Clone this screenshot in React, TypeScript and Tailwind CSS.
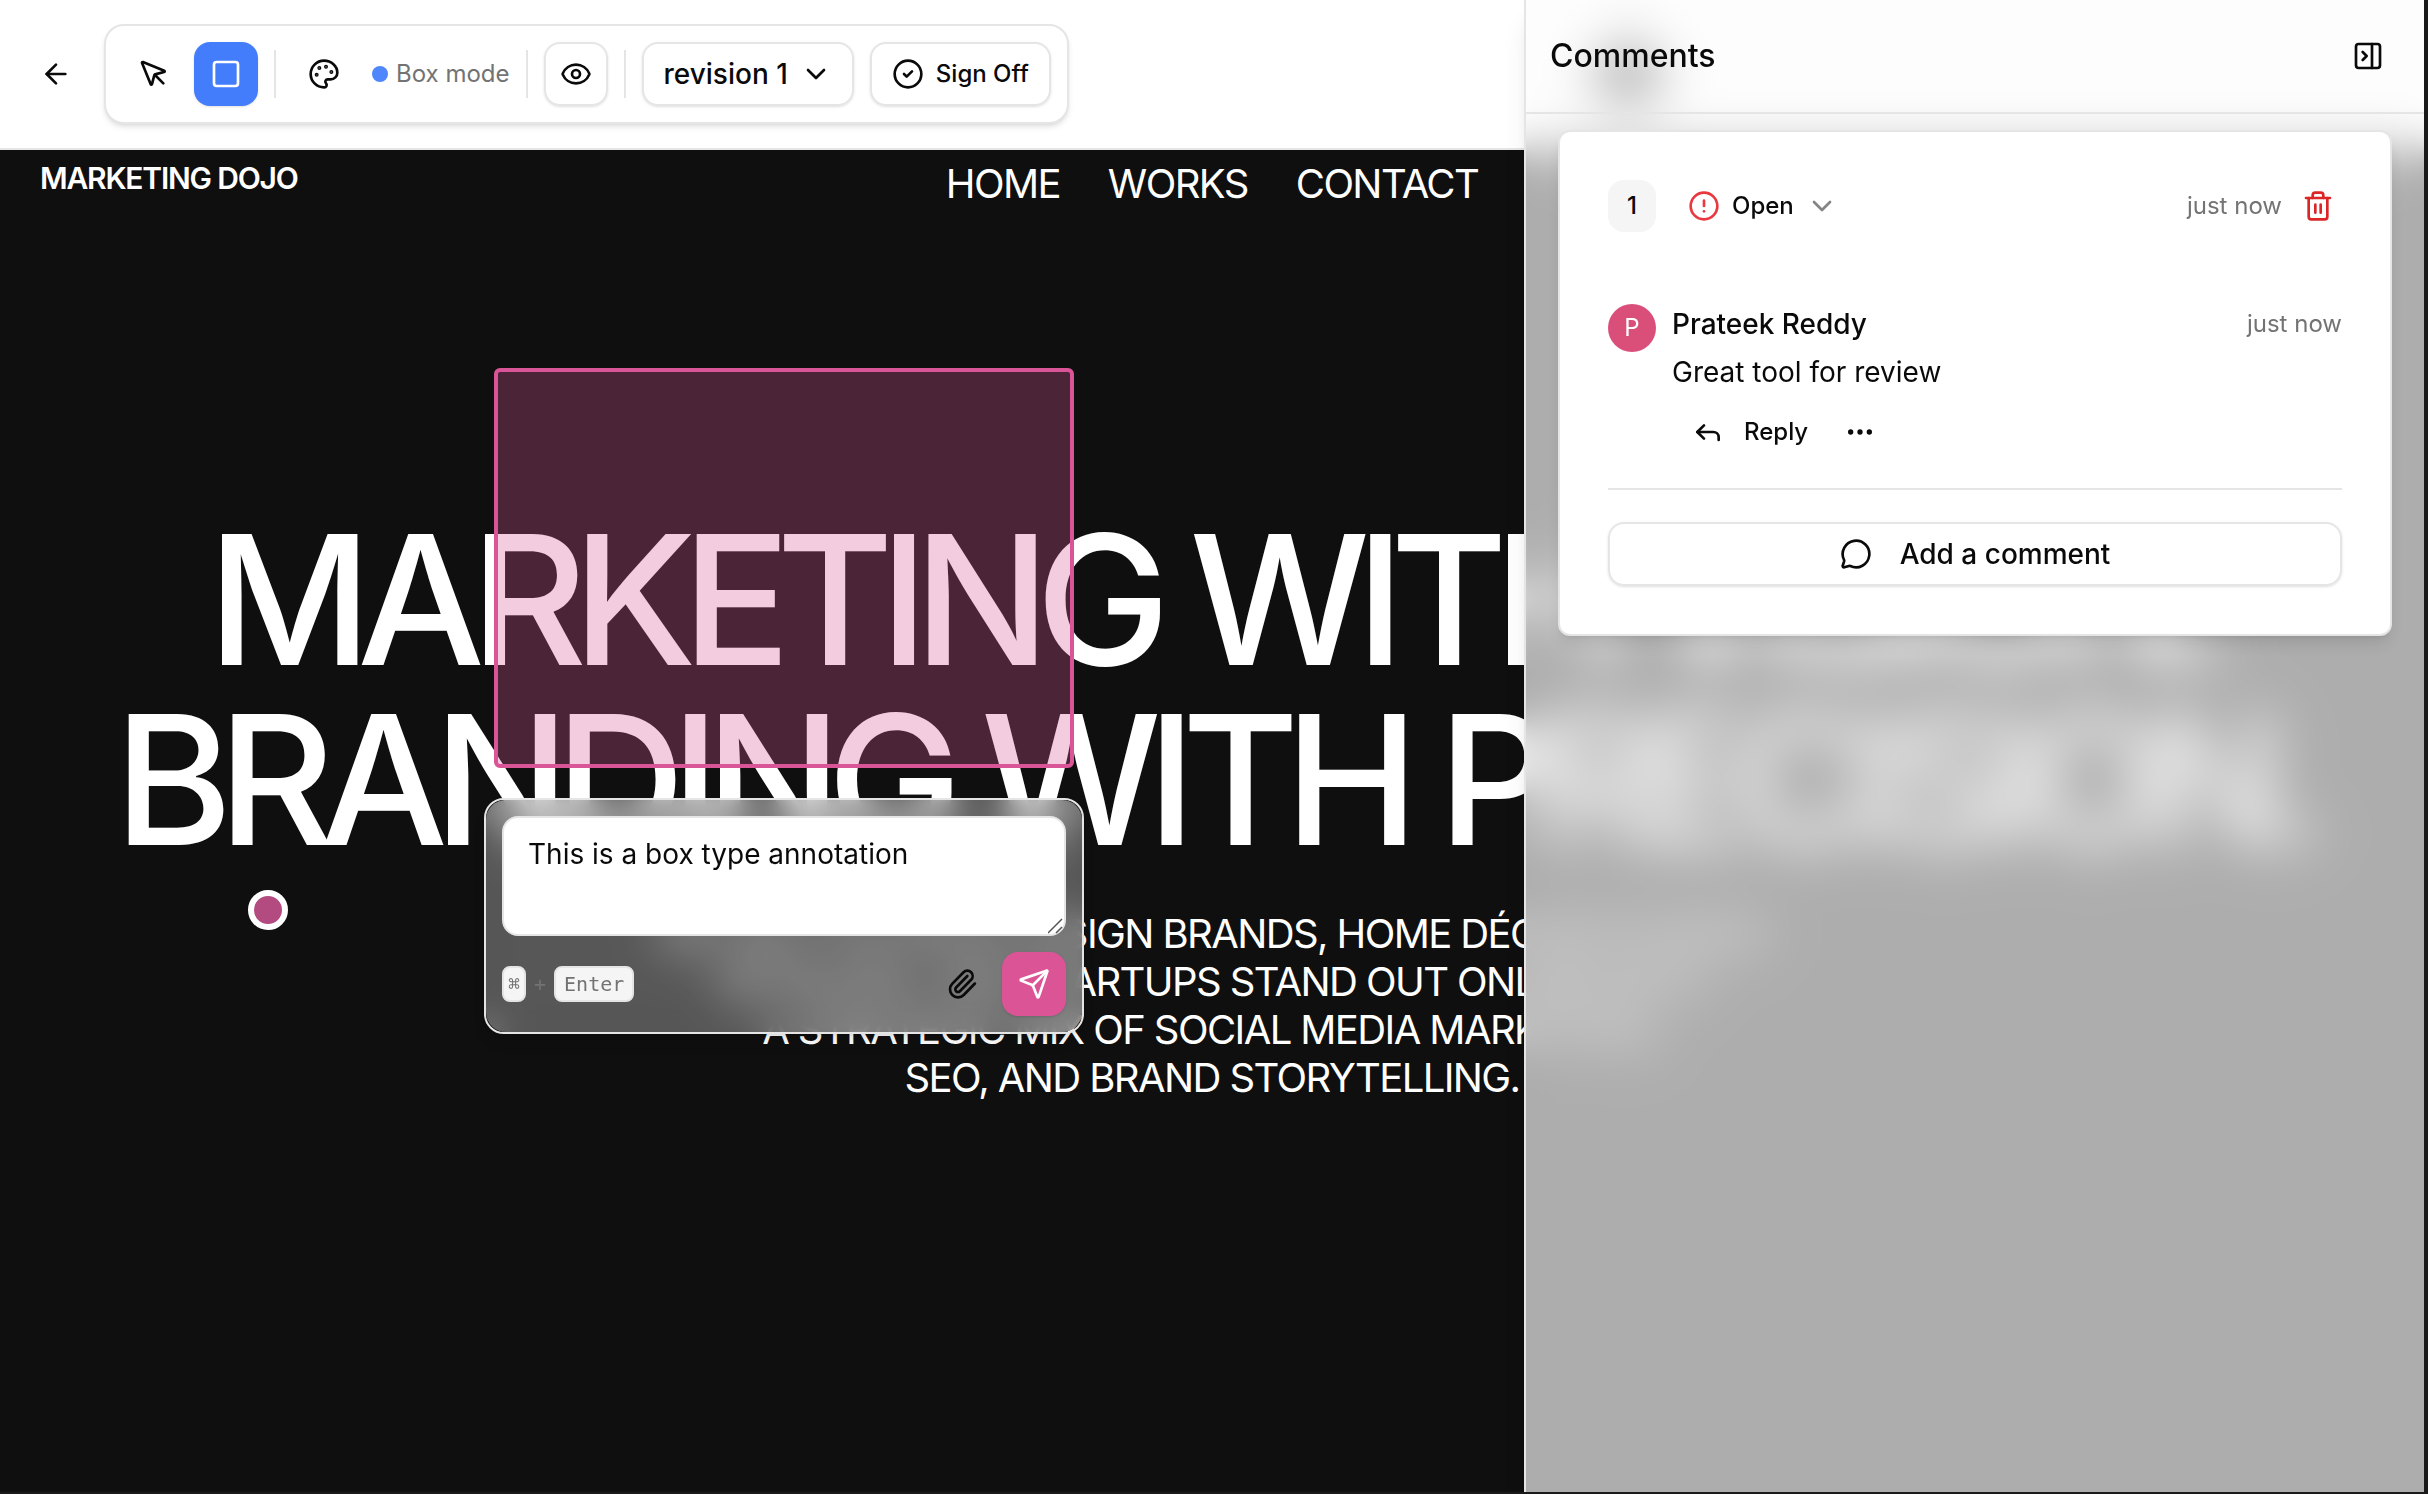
import { useState, type ButtonHTMLAttributes, type ReactNode } from "react";
import {
  ArrowLeft,
  ChevronDown,
  CircleAlert,
  CircleCheck,
  Ellipsis,
  Eye,
  MessageCircle,
  MousePointer,
  Palette,
  PanelRightClose,
  Paperclip,
  Reply,
  Send,
  Square,
  Trash2,
} from "lucide-react";

interface IconButtonProps extends ButtonHTMLAttributes<HTMLButtonElement> {
  label: string;
  children: ReactNode;
}

function IconButton({ label, children, className = "", ...rest }: IconButtonProps) {
  return (
    <button
      type="button"
      aria-label={label}
      className={`size-16 shrink-0 flex items-center justify-center rounded-2xl ${className}`}
      {...rest}
    >
      {children}
    </button>
  );
}

function Divider() {
  return <div className="w-0.5 h-12 bg-[#e5e5e5]" />;
}

// Frosted background. Several small blur passes instead of one big one,
// a single large radius lets the sharp content show through at the edges.
function Glass({ passes, tint }: { passes: number; tint: string }) {
  return (
    <>
      {Array.from({ length: passes }).map((_, i) => (
        <div key={i} className="absolute inset-0 rounded-[inherit] backdrop-blur-md" />
      ))}
      <div className={`absolute inset-0 rounded-[inherit] ${tint}`} />
    </>
  );
}

function Toolbar() {
  return (
    <header className="flex items-center gap-4 px-6 py-6 bg-white border-b-2 border-[#e5e5e5]">
      <IconButton label="Back">
        <ArrowLeft className="size-8" />
      </IconButton>

      <div className="flex items-center gap-4 p-4 bg-white border-2 border-[#e5e5e5] rounded-[20px] shadow-md">
        <div className="flex items-center gap-2">
          <IconButton label="Select">
            <MousePointer className="size-8" />
          </IconButton>
          <IconButton label="Box" className="bg-[#447dfc] text-white shadow-sm">
            <Square className="size-8" />
          </IconButton>
        </div>
        <Divider />
        <IconButton label="Color">
          <Palette className="size-8" />
        </IconButton>
        <div className="flex items-center gap-2 text-2xl text-[#737373]">
          <span className="size-4 rounded-full bg-[#4f86fc]" />
          Box mode
        </div>
        <Divider />
        <IconButton label="Preview" className="border-2 border-[#e5e5e5] shadow-sm">
          <Eye className="size-8" />
        </IconButton>
        <Divider />
        <button
          type="button"
          className="h-16 px-5 flex items-center gap-3 border-2 border-[#e5e5e5] rounded-2xl shadow-sm text-[28px] font-medium"
        >
          revision 1
          <ChevronDown className="size-8" />
        </button>
        <button
          type="button"
          className="h-16 px-5 flex items-center gap-3 border-2 border-[#e5e5e5] rounded-2xl shadow-sm text-2xl font-medium"
        >
          <CircleCheck className="size-8" />
          Sign Off
        </button>
      </div>

      {/* user avatar, sits under the comments panel */}
      <div className="grow flex justify-end pr-[740px]">
        <span className="size-16 rounded-full bg-[#111111]" />
      </div>
    </header>
  );
}

// The reviewed website, shown under the annotations
function SitePreview() {
  return (
    <main className="relative grow bg-[#0f0f0f] text-white">
      <nav className="grid grid-cols-3 items-start px-10 pt-2.5">
        <a href="#" className="text-[30px] leading-9 font-semibold tracking-[-0.04em]">
          MARKETING DOJO
        </a>
        <div className="flex justify-center gap-12 text-[40px] leading-12 tracking-[-0.04em]">
          <a href="#home">HOME</a>
          <a href="#works">WORKS</a>
          <a href="#contact">CONTACT</a>
        </div>
      </nav>

      <section className="pt-[302px] text-center whitespace-nowrap">
        <h1 className="text-[180px] leading-[180px] font-medium tracking-[-0.08em]">
          MARKETING WITH VISION.
          <br />
          BRANDING WITH PRECISION.
        </h1>
        <p className="mt-10 text-[40px] leading-12 tracking-[-0.04em]">
          WE HELP INTERIOR DESIGN BRANDS, HOME DÉCOR STUDIOS
          <br />
          RETAILERS, AND STARTUPS STAND OUT ONLINE WITH
          <br />
          A STRATEGIC MIX OF SOCIAL MEDIA MARKETING,
          <br />
          SEO, AND BRAND STORYTELLING.
        </p>
      </section>

      <div className="absolute left-[494px] top-[218px] w-[580px] h-[400px] border-4 border-[#da5597] bg-[#d75894]/30 rounded-md" />
      <button
        type="button"
        aria-label="Open pin"
        className="absolute left-[248px] top-[740px] size-10 rounded-full border-6 border-white bg-[#b34a80]"
      />
      <AnnotationForm />
    </main>
  );
}

function AnnotationForm() {
  const [text, setText] = useState("This is a box type annotation");

  return (
    <form
      className="absolute left-[484px] top-[648px] w-[600px] p-4 border-2 border-[#e5e5e5] rounded-[20px] shadow-lg text-[#0a0a0a]"
      onSubmit={(e) => e.preventDefault()}
    >
      <Glass passes={4} tint="bg-white/30" />
      <div className="relative">
        <textarea
          aria-label="Annotation"
          className="block w-full h-[120px] px-6 py-4 resize-none bg-white border-2 border-[#e5e5e5] rounded-2xl text-[28px] leading-10 outline-none"
          value={text}
          onChange={(e) => setText(e.target.value)}
        />
        <svg
          viewBox="0 0 16 16"
          className="absolute right-0.5 bottom-0.5 size-4 text-[#555555]"
          fill="none"
          stroke="currentColor"
          strokeWidth="1.5"
        >
          <path d="M0 15 14 1M8 15l6-6" />
        </svg>
      </div>

      <div className="relative mt-4 flex items-center justify-between">
        <div className="flex items-center gap-2 font-['DejaVu_Sans_Mono',monospace] text-xl leading-8 text-[#737373]">
          <kbd className="w-6 flex justify-center font-['DejaVu_Sans_Mono',monospace] bg-[#f5f5f5] border-2 border-[#e5e5e5] rounded-lg">
            ⌘
          </kbd>
          <span>+</span>
          <kbd className="px-2 font-['DejaVu_Sans_Mono',monospace] bg-[#f5f5f5] border-2 border-[#e5e5e5] rounded-lg">
            Enter
          </kbd>
        </div>
        <div className="flex items-center gap-2">
          <IconButton label="Attach file">
            <Paperclip className="size-8" />
          </IconButton>
          <IconButton label="Send" type="submit" className="bg-[#db5596] text-white shadow-sm">
            <Send className="size-8" />
          </IconButton>
        </div>
      </div>
    </form>
  );
}

function CommentCard() {
  return (
    <article className="p-12 bg-white border-2 border-[#e5e5e5] rounded-xl shadow-lg">
      <div className="flex items-center">
        <span className="w-12 h-[52px] flex items-center justify-center rounded-2xl bg-[#f5f5f5] text-2xl font-medium">
          1
        </span>
        <button type="button" className="ml-4 px-4 flex items-center gap-3 text-2xl font-medium">
          <CircleAlert className="size-8 text-[#e7393f]" />
          Open
          <ChevronDown className="size-8 opacity-50" />
        </button>
        <time className="ml-auto mr-3 text-2xl text-[#737373]">just now</time>
        <button type="button" aria-label="Delete" className="px-2 text-[#dc2626]">
          <Trash2 className="size-8" />
        </button>
      </div>

      <div className="mt-[72px] flex gap-4">
        <span className="size-12 shrink-0 flex items-center justify-center rounded-full bg-[#da4f7a] text-white text-2xl">
          P
        </span>
        <div className="grow text-[28px] leading-10">
          <div className="flex items-center justify-between">
            <h3 className="font-medium">Prateek Reddy</h3>
            <time className="text-2xl text-[#737373]">just now</time>
          </div>
          <p className="mt-2">Great tool for review</p>
          <div className="mt-2 flex items-center">
            <button type="button" className="h-16 px-5 flex items-center gap-5 text-2xl font-medium">
              <Reply className="size-8" />
              Reply
            </button>
            <IconButton label="More">
              <Ellipsis className="size-8" />
            </IconButton>
          </div>
        </div>
      </div>

      <hr className="mt-6 border-t-2 border-[#e5e5e5]" />

      <button
        type="button"
        className="mt-8 w-full h-16 flex items-center justify-center gap-7 border-2 border-[#e5e5e5] rounded-2xl shadow-sm text-[28px] font-medium"
      >
        <MessageCircle className="size-8" />
        Add a comment
      </button>
    </article>
  );
}

function CommentsPanel() {
  return (
    <aside className="absolute inset-y-0 right-0 w-[900px] border-l-2 border-[#e5e5e5] shadow-xl">
      <Glass passes={5} tint="bg-[#fefcfd]/67" />
      <div className="relative flex items-center justify-between p-6 border-b-2 border-[#e5e5e5]">
        <h2 className="text-[32px] font-medium">Comments</h2>
        <IconButton label="Close panel">
          <PanelRightClose className="size-8" />
        </IconButton>
      </div>
      <div className="relative px-8 py-4">
        <CommentCard />
      </div>
    </aside>
  );
}

export default function App() {
  return (
    <div className="min-h-screen flex flex-col bg-[#1a1a1a] pr-1 pb-0.5 font-[Inter,sans-serif] text-[#0a0a0a]">
      <div className="relative grow flex flex-col overflow-hidden">
        <Toolbar />
        <SitePreview />
        <CommentsPanel />
      </div>
    </div>
  );
}
